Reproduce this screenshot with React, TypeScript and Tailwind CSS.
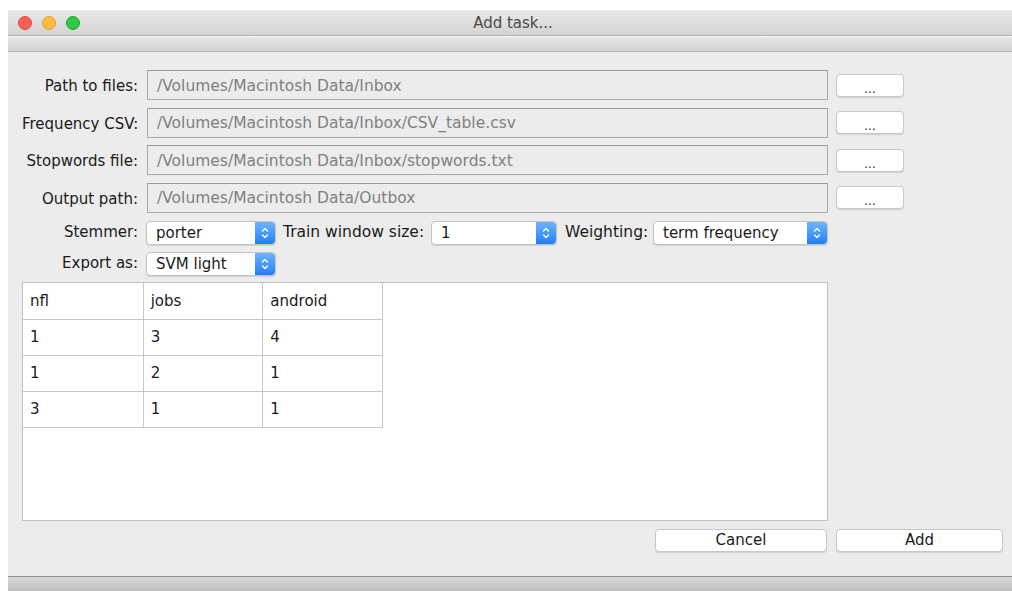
import React from 'react'

const font = { fontFamily: '"DejaVu Sans", "Liberation Sans", sans-serif' }

const paths = [
  { label: 'Path to files:', value: '/Volumes/Macintosh Data/Inbox' },
  { label: 'Frequency CSV:', value: '/Volumes/Macintosh Data/Inbox/CSV_table.csv' },
  { label: 'Stopwords file:', value: '/Volumes/Macintosh Data/Inbox/stopwords.txt' },
  { label: 'Output path:', value: '/Volumes/Macintosh Data/Outbox' },
]

const columns = ['nfl', 'jobs', 'android']
const rows = [
  ['1', '3', '4'],
  ['1', '2', '1'],
  ['3', '1', '1'],
]

const Stepper = () => (
  <div className="flex h-full w-[20px] items-center justify-center rounded-r-[4px] bg-gradient-to-b from-[#6db4fb] to-[#1b7ff8]">
    <svg width="8" height="14" viewBox="0 0 8 14" fill="none" stroke="white" strokeWidth="1.4" strokeLinecap="round" strokeLinejoin="round">
      <path d="M1.5 5 L4 2.5 L6.5 5" />
      <path d="M1.5 9 L4 11.5 L6.5 9" />
    </svg>
  </div>
)

const Select: React.FC<{ value: string; width: string }> = ({ value, width }) => (
  <div className={`flex h-[24px] ${width} items-stretch rounded-[4px] border border-[#c4c4c4] bg-white shadow-[0_1px_1px_rgba(0,0,0,0.12)]`}>
    <div className="flex flex-1 items-center pl-[9px] pt-[2px] text-[15px] text-[#1a1a1a]">{value}</div>
    <Stepper />
  </div>
)

const PushButton: React.FC<{ children: React.ReactNode; width: string }> = ({ children, width }) => (
  <button className={`flex h-[23px] ${width} items-center justify-center rounded-[4px] border border-[#c8c8c8] bg-white pt-[1px] text-[15px] text-[#1a1a1a] shadow-[0_1px_1px_rgba(0,0,0,0.12)]`}>
    {children}
  </button>
)

function App() {
  return (
    <div className="h-[591px] w-[1012px] overflow-hidden bg-white pl-[8px] pt-[10px]" style={font}>
      <div className="flex h-[581px] w-[1004px] flex-col bg-[#ececec]">
        {/* title bar */}
        <div className="relative flex h-[26px] items-center border-b border-[#b3b3b3] bg-gradient-to-b from-[#e9e9e9] to-[#d3d3d3]">
          <div className="ml-[10px] flex gap-[10px]">
            <span className="h-[14px] w-[14px] rounded-full border border-[#e2463f] bg-[#fc5f57]" />
            <span className="h-[14px] w-[14px] rounded-full border border-[#e1a02e] bg-[#fdbb40]" />
            <span className="h-[14px] w-[14px] rounded-full border border-[#1aab29] bg-[#33c748]" />
          </div>
          <div className="absolute inset-0 flex items-center justify-center pl-[6px] pt-[1px] text-[15px] text-[#4a4a4a]">Add task...</div>
        </div>
        <div className="h-[16px] border-b border-[#b5b5b5] border-t border-t-[#f4f4f4] bg-gradient-to-b from-[#e6e6e6] to-[#d2d2d2]" />

        {/* form */}
        <div className="flex flex-1 flex-col pl-[14px] pr-[9px] pt-[18px]">
          <div className="flex flex-col gap-[7.5px]">
            {paths.map(p => (
              <div key={p.label} className="flex h-[30px] items-center">
                <div className="w-[116px] whitespace-nowrap pt-[3px] text-right text-[15px] text-[#1a1a1a]">{p.label}</div>
                <div className="ml-[9px] flex h-[30px] w-[681px] items-center border border-[#a9a9a9] border-t-[#9a9a9a] bg-[#ececec] pl-[9px] pt-[3px] text-[15.5px] text-[#808080]">
                  {p.value}
                </div>
                <div className="ml-[8px]">
                  <PushButton width="w-[68px]">
                    <span className="pt-[6px] text-[12px] leading-none">...</span>
                  </PushButton>
                </div>
              </div>
            ))}
          </div>

          <div className="mt-[7px] flex h-[24px] items-center pt-[2px] text-[15px] text-[#1a1a1a]">
            <div className="w-[116px] text-right">Stemmer:</div>
            <div className="ml-[8px]">
              <Select value="porter" width="w-[130px]" />
            </div>
            <div className="ml-[7px] w-[142px] whitespace-nowrap text-[15.5px]">Train window size:</div>
            <div className="ml-[6px]">
              <Select value="1" width="w-[126px]" />
            </div>
            <div className="ml-[8px] w-[82px] whitespace-nowrap text-[15.5px]">Weighting:</div>
            <div className="ml-[6px]">
              <Select value="term frequency" width="w-[175px]" />
            </div>
          </div>

          <div className="mt-[7px] flex h-[24px] items-center pt-[2px] text-[15px] text-[#1a1a1a]">
            <div className="w-[116px] text-right">Export as:</div>
            <div className="ml-[8px]">
              <Select value="SVM light" width="w-[130px]" />
            </div>
          </div>

          {/* data table */}
          <div className="mt-[7px] h-[239px] w-[806px] border border-[#c2c2c2] bg-white">
            <div className="grid w-[360px] grid-cols-3 border-b border-r border-[#c6c6c6]">
              {[columns, ...rows].map((r, i) =>
                r.map((c, j) => (
                  <div
                    key={`${i}-${j}`}
                    className={`flex h-[36px] items-center pl-[7px] pt-[1px] text-[15px] text-[#1a1a1a] ${j > 0 ? 'border-l border-[#c6c6c6]' : ''} ${i > 0 ? 'border-t border-[#c6c6c6]' : ''}`}
                  >
                    {c}
                  </div>
                ))
              )}
            </div>
          </div>

          <div className="mt-[8px] flex justify-end gap-[9px]">
            <PushButton width="w-[172px]">Cancel</PushButton>
            <PushButton width="w-[167px]">Add</PushButton>
          </div>
        </div>

        {/* bottom bar */}
        <div className="h-[15px] border-t border-[#8e8e8e] bg-gradient-to-b from-[#d9d9d9] to-[#bdbdbd]" />
      </div>
    </div>
  )
}

export default App
